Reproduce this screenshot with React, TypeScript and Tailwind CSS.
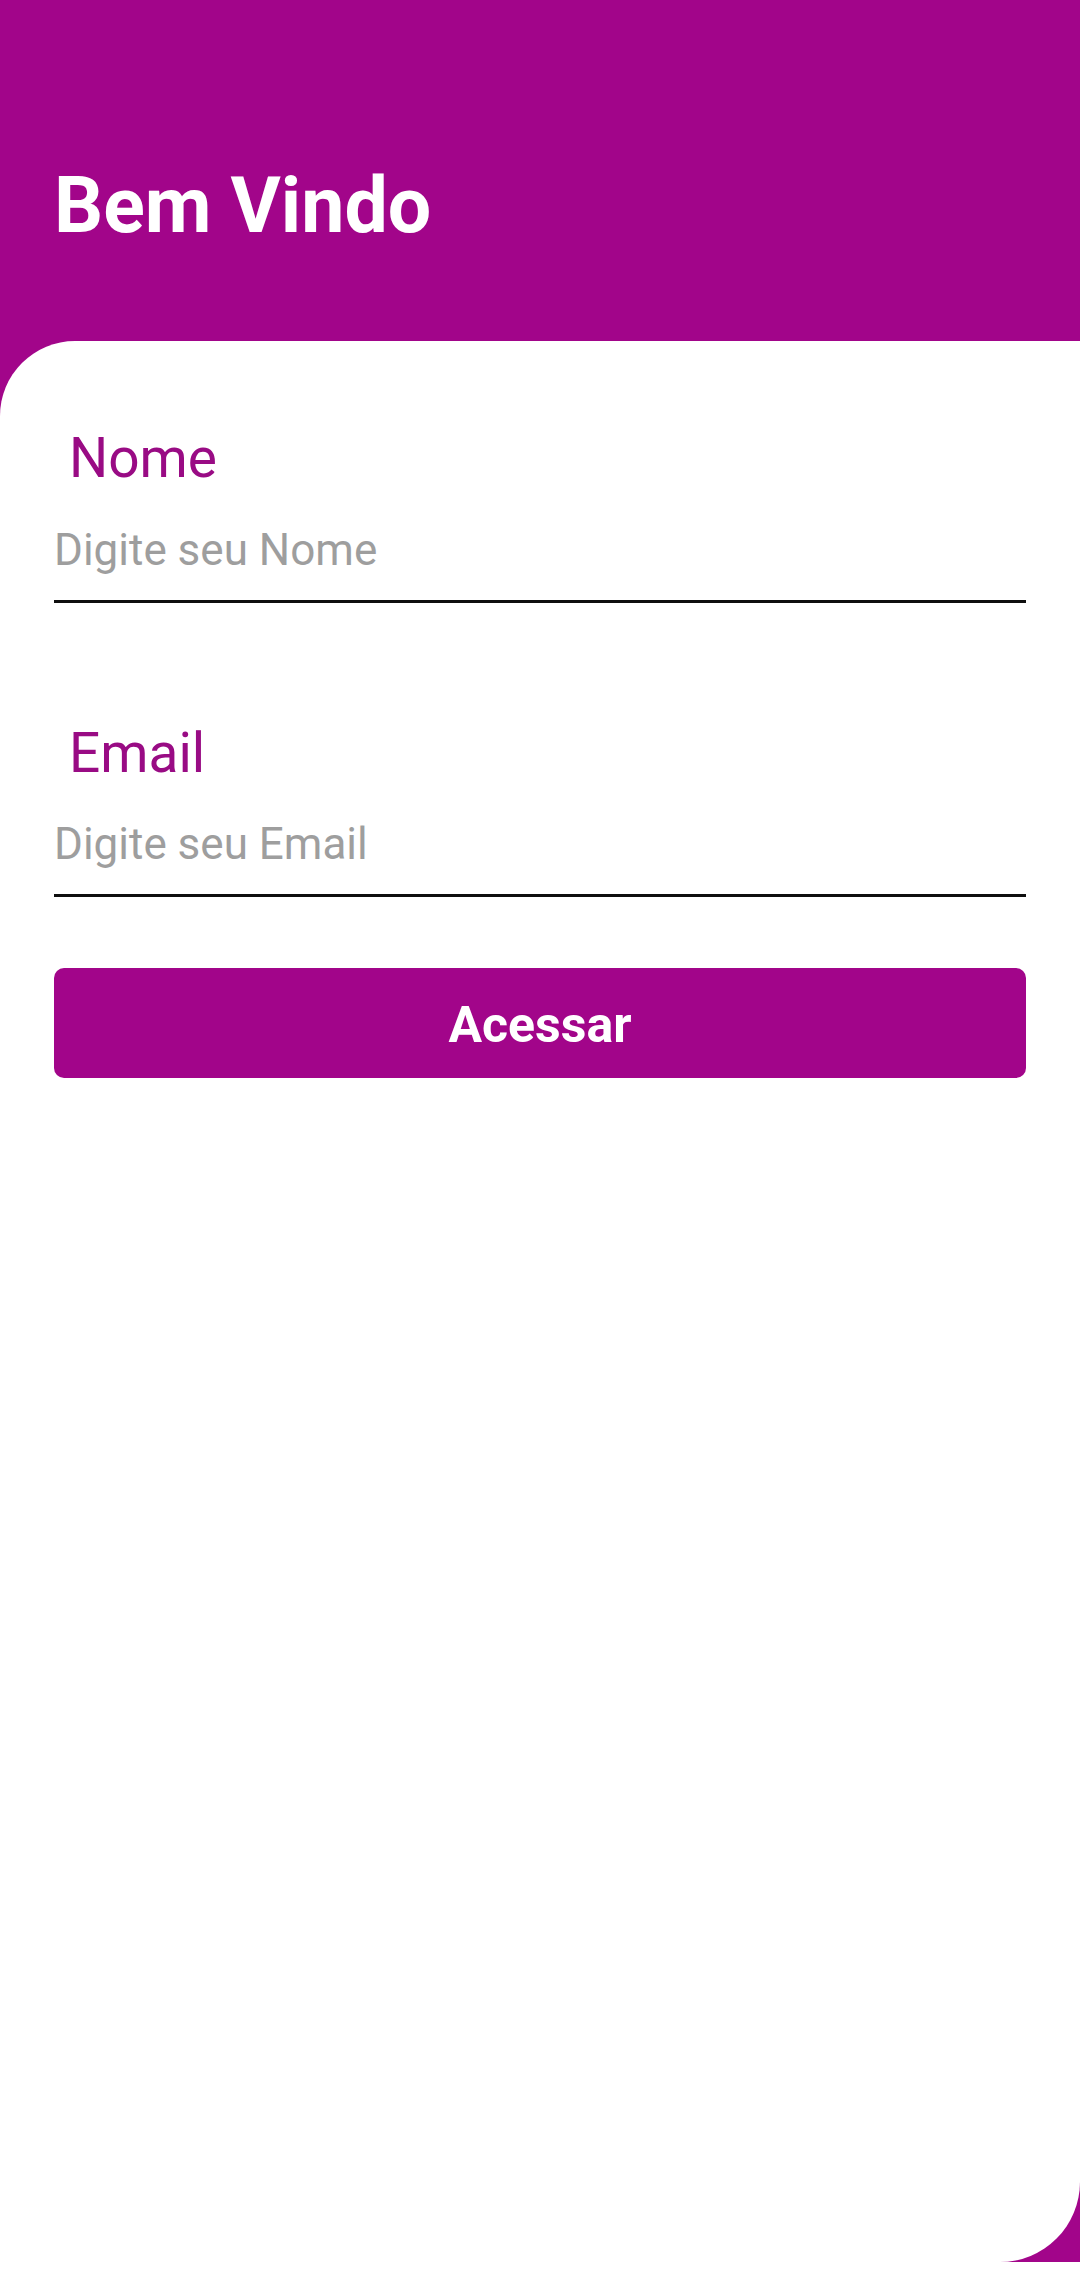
import React, { useState } from "react";

const App = () => {
  const [nome, setNome] = useState<string>("");
  const [email, setEmail] = useState<string>("");

  return (
    <div className="w-[1080px] h-[2272px] bg-white font-['Roboto',sans-serif]">
      <div className="h-[2262px] bg-[#a2058a] flex flex-col">
        {/* cabeçalho */}
        <div className="h-[341px] shrink-0 pt-[168px] pl-[54px]">
          <h1 className="text-[77px] leading-[77px] font-bold text-white">Bem Vindo</h1>
        </div>

        {/* cartão branco */}
        <div className="flex-1 bg-white rounded-tl-[75px] rounded-br-[80px] px-[54px] pt-[90px] flex flex-col">
          <label className="pl-[15px] text-[55px] leading-[55px] text-[#990b84]">Nome</label>
          <input
            type="text"
            value={nome}
            onChange={(e) => setNome(e.target.value)}
            placeholder="Digite seu Nome"
            className="mt-[38px] w-full text-[44px] leading-[44px] pb-[24px] border-b-[3px] border-[#0f0f0f] outline-none bg-transparent text-[#222] placeholder-[#9e9e9e]"
          />

          <label className="mt-[123px] pl-[15px] text-[55px] leading-[55px] text-[#990b84]">Email</label>
          <input
            type="email"
            value={email}
            onChange={(e) => setEmail(e.target.value)}
            placeholder="Digite seu Email"
            className="mt-[37px] w-full text-[44px] leading-[44px] pb-[24px] border-b-[3px] border-[#0f0f0f] outline-none bg-transparent text-[#222] placeholder-[#9e9e9e]"
          />

          <button
            type="button"
            className="mt-[71px] h-[110px] w-full rounded-[10px] bg-[#a2058a] pt-[4px] text-white text-[50px] font-bold"
          >
            Acessar
          </button>
        </div>
      </div>
    </div>
  );
};

export default App;
